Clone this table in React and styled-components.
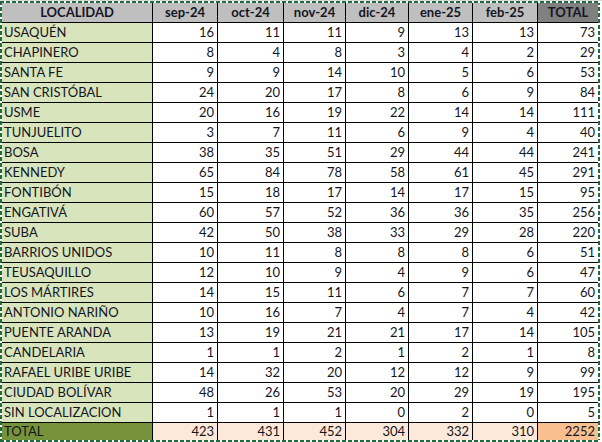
import React from 'react'
import styled, { createGlobalStyle } from 'styled-components'

const months = ['sep-24', 'oct-24', 'nov-24', 'dic-24', 'ene-25', 'feb-25']

const rows = [
  ['USAQUÉN', 16, 11, 11, 9, 13, 13, 73],
  ['CHAPINERO', 8, 4, 8, 3, 4, 2, 29],
  ['SANTA FE', 9, 9, 14, 10, 5, 6, 53],
  ['SAN CRISTÓBAL', 24, 20, 17, 8, 6, 9, 84],
  ['USME', 20, 16, 19, 22, 14, 14, 111],
  ['TUNJUELITO', 3, 7, 11, 6, 9, 4, 40],
  ['BOSA', 38, 35, 51, 29, 44, 44, 241],
  ['KENNEDY', 65, 84, 78, 58, 61, 45, 291],
  ['FONTIBÓN', 15, 18, 17, 14, 17, 15, 95],
  ['ENGATIVÁ', 60, 57, 52, 36, 36, 35, 256],
  ['SUBA', 42, 50, 38, 33, 29, 28, 220],
  ['BARRIOS UNIDOS', 10, 11, 8, 8, 8, 6, 51],
  ['TEUSAQUILLO', 12, 10, 9, 4, 9, 6, 47],
  ['LOS MÁRTIRES', 14, 15, 11, 6, 7, 7, 60],
  ['ANTONIO NARIÑO', 10, 16, 7, 4, 7, 4, 42],
  ['PUENTE ARANDA', 13, 19, 21, 21, 17, 14, 105],
  ['CANDELARIA', 1, 1, 2, 1, 2, 1, 8],
  ['RAFAEL URIBE URIBE', 14, 32, 20, 12, 12, 9, 99],
  ['CIUDAD BOLÍVAR', 48, 26, 53, 20, 29, 19, 195],
  ['SIN LOCALIZACION', 1, 1, 1, 0, 2, 0, 5],
]

const totals = [423, 431, 452, 304, 332, 310, 2252]

const GlobalStyle = createGlobalStyle`
  html, body {
    margin: 0;
    background: #fff;
  }
  body {
    font-family: Lato, "Liberation Sans", sans-serif;
    font-size: 13px;
    color: #15151f;
  }
`

const Page = styled.div`
  width: 602px;
  height: 442px;
  overflow: hidden;
  border-top: 1px solid #d9d9d9;
  box-sizing: border-box;
`

const ants = (dir) =>
  `repeating-linear-gradient(${dir}, #1f6b3b 0 4px, #fff 4px 6px)`

const Frame = styled.div`
  width: 600px;
  box-sizing: border-box;
  padding: 2px;
  background:
    ${ants('90deg')} top left / 100% 2px no-repeat,
    ${ants('90deg')} bottom left / 100% 2px no-repeat,
    ${ants('180deg')} top left / 2px 100% no-repeat,
    ${ants('180deg')} top right / 2px 100% no-repeat;
`

const Grid = styled.div`
  display: grid;
  grid-template-columns: 150px 64px 65px 61px 62px 63px 64px 60px;
  grid-template-rows: 19px repeat(20, 19px) 17px;
  gap: 1px;
  background: #000;
`

const Cell = styled.div`
  display: flex;
  align-items: center;
  overflow: hidden;
  white-space: nowrap;
  line-height: 1;
  background: ${(p) => p.$bg || '#fff'};
  justify-content: ${(p) => (p.$align === 'left' ? 'flex-start' : p.$align === 'center' ? 'center' : 'flex-end')};
  padding: ${(p) => (p.$align === 'left' ? '0 0 0 2px' : p.$align === 'center' ? '0' : '0 3px 0 0')};
  font-weight: ${(p) => (p.$bold ? 700 : 400)};
`

export default function App() {
  return (
    <>
      <GlobalStyle />
      <Page>
        <Frame>
          <Grid>
            <Cell $align="center" $bold $bg="#bfbfbf">LOCALIDAD</Cell>
            {months.map((m) => (
              <Cell key={m} $align="center" $bold $bg="#bfbfbf">{m}</Cell>
            ))}
            <Cell $align="center" $bold $bg="#808080">TOTAL</Cell>

            {rows.map(([name, ...values]) => (
              <React.Fragment key={name}>
                <Cell $align="left" $bg="#d8e4bc">{name}</Cell>
                {values.map((v, i) => (
                  <Cell key={i}>{v}</Cell>
                ))}
              </React.Fragment>
            ))}

            <Cell $align="left" $bg="#76933c">TOTAL</Cell>
            {totals.map((v, i) => (
              <Cell key={i} $bg={i === totals.length - 1 ? '#fabf8f' : '#fde9d9'}>{v}</Cell>
            ))}
          </Grid>
        </Frame>
      </Page>
    </>
  )
}
